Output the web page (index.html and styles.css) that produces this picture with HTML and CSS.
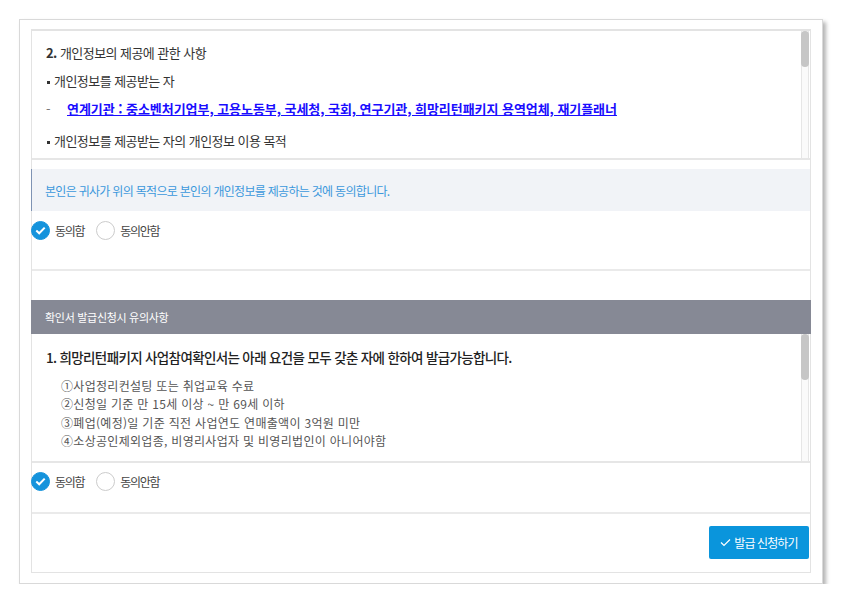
FILE: index.html
```html
<!DOCTYPE html>
<html lang="ko">

<head>
  <meta charset="UTF-8" />
  <meta name="viewport" content="width=device-width, initial-scale=1.0" />
  <title>희망리턴패키지 - 사업참여확인서 발급신청</title>
  <link rel="stylesheet" href="styles.css">
</head>

<body>
  <div class="window">
    <div class="panel">

      <!-- 개인정보 제공 동의 -->
      <div class="agree-section">
        <div class="scroll-box">
          <div class="scroll-content terms">
            <p class="terms-title"><b>2.</b> 개인정보의 제공에 관한 사항</p>
            <p class="item">개인정보를 제공받는 자</p>
            <p class="terms-link"><span class="dash">-</span><a href="#">연계기관 : 중소벤처기업부, 고용노동부, 국세청, 국회, 연구기관, 희망리턴패키지 용역업체, 재기플래너</a></p>
            <p class="item gap">개인정보를 제공받는 자의 개인정보 이용 목적</p>
            <p class="terms-sub"><span class="dash">-</span>희망리턴패키지 사업 운영, 사업 성과관리 및 사후관리</p>
            <p class="item">제공하는 개인정보의 항목</p>
            <p class="terms-sub"><span class="dash">-</span>성명, 생년월일, 연락처, 주소, 사업자등록번호, 폐업일자, 지원이력</p>
          </div>
          <div class="scrollbar"><div class="thumb thumb-terms"></div></div>
        </div>

        <div class="notice">본인은 귀사가 위의 목적으로 본인의 개인정보를 제공하는 것에 동의합니다.</div>

        <div class="radio-row">
          <label class="radio"><input type="radio" name="agree1" checked><span class="mark"></span>동의함</label>
          <label class="radio"><input type="radio" name="agree1"><span class="mark"></span>동의안함</label>
        </div>
      </div>

      <!-- 유의사항 -->
      <div class="caution-head">확인서 발급신청시 유의사항</div>

      <div class="caution-section">
        <div class="scroll-box">
          <div class="scroll-content caution">
            <p class="caution-title">1. 희망리턴패키지 사업참여확인서는 아래 요건을 모두 갖춘 자에 한하여 발급가능합니다.</p>
            <ul class="caution-list">
              <li>①사업정리컨설팅 또는 취업교육 수료</li>
              <li>②신청일 기준 만 15세 이상 ~ 만 69세 이하</li>
              <li>③폐업(예정)일 기준 직전 사업연도 연매출액이 3억원 미만</li>
              <li>④소상공인제외업종, 비영리사업자 및 비영리법인이 아니어야함</li>
            </ul>
          </div>
          <div class="scrollbar"><div class="thumb thumb-caution"></div></div>
        </div>

        <div class="radio-row">
          <label class="radio"><input type="radio" name="agree2" checked><span class="mark"></span>동의함</label>
          <label class="radio"><input type="radio" name="agree2"><span class="mark"></span>동의안함</label>
        </div>
      </div>

      <div class="btn-area">
        <button type="button" class="apply-btn">
          <svg width="11" height="9" viewBox="0 0 11 9"><path d="M1 4.5 L4 7.5 L10 1.5" fill="none" stroke="#fff" stroke-width="1.2"/></svg>
          발급 신청하기
        </button>
      </div>

    </div>
  </div>
</body>

</html>
```

FILE: styles.css
```css
body {
  margin: 0;
  background-color: #fff;
  font-family: "Noto Sans CJK KR", "Noto Sans", sans-serif;
  color: #333;
}

p {
  margin: 0;
}

a {
  color: #1a0dff;
}

/* 바깥 창 */
.window {
  box-sizing: border-box;
  width: 804px;
  height: 565px;
  margin: 19px 0 0 19px;
  padding: 9px 11px 11px 11px;
  border: 1px solid #d9d9d9;
  background-color: #fff;
  box-shadow: 3px 3px 4px rgba(0, 0, 0, 0.3);
}

.panel {
  box-sizing: border-box;
  height: 544px;
  border: 1px solid #e3e3e3;
  border-top-width: 2px;
  display: flex;
  flex-direction: column;
}

/* 스크롤 박스 */
.scroll-box {
  box-sizing: border-box;
  height: 129px;
  display: flex;
  border-bottom: 2px solid #e6e6e6;
}

.scroll-content {
  flex: 1;
  overflow: hidden;
}

.scrollbar {
  box-sizing: border-box;
  width: 8px;
  margin-right: 1px;
  background-color: #fafafa;
  border-left: 1px solid #e6e6e6;
  border-right: 1px solid #e6e6e6;
}

.thumb {
  margin-left: -1px;
  margin-right: -1px;
  background-color: #c6c6c6;
  border-radius: 4px;
}

.thumb-terms {
  height: 36px;
}

.thumb-caution {
  height: 46px;
}

.terms {
  padding: 8px 0 0 14px;
  font-size: 13px;
  line-height: 28px;
  letter-spacing: -0.55px;
}

.terms-title b {
  font-weight: 700;
}

.item::before {
  content: "";
  display: inline-block;
  width: 3px;
  height: 3px;
  margin: 0 4px 0 1px;
  vertical-align: middle;
  background-color: #333;
}

.terms .dash {
  display: inline-block;
  width: 21px;
  color: #777;
}

.terms-link a {
  font-weight: 700;
  letter-spacing: -0.05px;
}

.gap {
  margin-top: 4px;
}

.notice {
  margin-top: 9px;
  height: 42px;
  display: flex;
  align-items: center;
  padding-left: 13px;
  border-left: 1px solid #7f93b3;
  margin-left: -1px;
  background-color: #f1f3f7;
  color: #3c98dc;
  font-size: 12px;
  letter-spacing: -0.7px;
}

/* 라디오 */
.radio-row {
  display: flex;
  gap: 12px;
  align-items: center;
  margin-left: -1px;
  height: 19px;
}

.radio {
  display: flex;
  align-items: center;
  font-size: 12px;
  color: #444;
  letter-spacing: -1.3px;
}

.radio input {
  display: none;
}

.radio .mark {
  box-sizing: border-box;
  width: 19px;
  height: 19px;
  margin-right: 5px;
  border: 1px solid #ccc;
  border-radius: 50%;
  background-color: #fff;
}

.radio input:checked + .mark {
  border-color: #1593dc;
  background: #1593dc url("data:image/svg+xml;utf8,<svg xmlns='http://www.w3.org/2000/svg' width='11' height='9' viewBox='0 0 11 9'><path d='M1.3 4.6 L4.2 7.3 L9.7 1.6' fill='none' stroke='white' stroke-width='2'/></svg>") no-repeat center;
}

.agree-section {
  border-bottom: 2px solid #eaeaea;
  padding-bottom: 29px;
}

.agree-section .radio-row {
  margin-top: 10px;
}

/* 유의사항 */
.caution-head {
  margin-top: 29px;
  height: 34px;
  display: flex;
  align-items: center;
  padding-left: 14px;
  margin-left: -1px;
  margin-right: -1px;
  background-color: #868995;
  color: #fff;
  font-size: 11px;
  letter-spacing: -0.3px;
}

.caution {
  padding: 13px 0 0 14px;
}

.caution-title {
  font-size: 13.5px;
  font-weight: 500;
  color: #222;
  line-height: 20px;
  letter-spacing: -0.65px;
}

.caution-list {
  list-style: none;
  margin: 10px 0 0 0;
  padding-left: 15px;
  font-size: 12px;
  line-height: 18.4px;
  color: #555;
  letter-spacing: 0.3px;
}

.caution-section {
  border-bottom: 2px solid #eaeaea;
  padding-bottom: 21px;
}

.caution-section .radio-row {
  margin-top: 9px;
}

/* 버튼 */
.btn-area {
  display: flex;
  justify-content: flex-end;
  padding: 12px 1px 0 0;
}

.apply-btn {
  width: 100px;
  height: 33px;
  display: flex;
  align-items: center;
  justify-content: center;
  gap: 3px;
  border: none;
  border-radius: 2px;
  background-color: #0a95dc;
  color: #fff;
  font-family: "Noto Sans CJK KR", "Noto Sans", sans-serif;
  font-size: 12px;
  letter-spacing: -0.9px;
  cursor: pointer;
}

.apply-btn:hover {
  background-color: #0884c4;
}
```
